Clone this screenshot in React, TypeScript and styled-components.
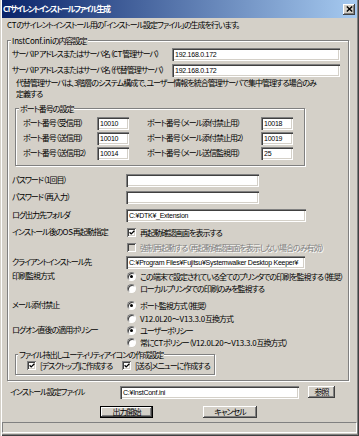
import styled, { createGlobalStyle } from 'styled-components';

const GlobalStyle = createGlobalStyle`
  html, body { margin: 0; padding: 0; background: #d4d0c8; }
  body {
    font-family: "Noto Sans CJK JP", "Noto Sans", sans-serif;
    font-size: 8px;
    letter-spacing: -1px;
    font-feature-settings: "palt";
    color: #000;
  }
  * { box-sizing: border-box; }
`;

const Window = styled.div`
  width: 359px;
  height: 436px;
  background: #d4d0c8;
  padding: 0 2px 2px 2px;
  display: flex;
  flex-direction: column;
  box-shadow: inset 1px 0 #d4d0c8, inset 2px 0 #fff, inset -1px -1px #404040,
    inset -2px -2px #808080;
`;

const TitleBar = styled.div`
  height: 18px;
  flex: none;
  display: flex;
  align-items: center;
  justify-content: space-between;
  padding: 0 2px 0 1px;
  background: linear-gradient(to right, #0a246a, #a6caf0);
`;

const Title = styled.span`
  color: #fff;
  font-weight: bold;
  font-size: 8px;
  letter-spacing: -1.5px;
  line-height: 18px;
  white-space: nowrap;
`;

const CloseButton = styled.div`
  width: 12px;
  height: 11px;
  background: #d4d0c8;
  box-shadow: inset -1px -1px #404040, inset 1px 1px #fff, inset -2px -2px #808080;
  display: flex;
  align-items: center;
  justify-content: center;
`;

// latin runs inside japanese text keep (almost) normal spacing
const Lat = styled.span`
  letter-spacing: -0.2px;
`;

const Intro = styled.div`
  height: 14px;
  line-height: 14px;
  margin-left: 5px;
  white-space: nowrap;
`;

const Group = styled.fieldset<{ $w: number; $ml: number; $mt: number; $pb: number; $pl?: number }>`
  margin: ${(p) => p.$mt}px 0 0 ${(p) => p.$ml}px;
  padding: 0 0 ${(p) => p.$pb}px ${(p) => p.$pl ?? 4}px;
  width: ${(p) => p.$w}px;
  min-width: 0;
  flex: none;
  border: 1px solid #808080;
  box-shadow: inset 1px 1px #fff, 1px 1px #fff;
`;

const Legend = styled.legend`
  padding: 0 1px;
  margin-left: -1px;
  height: 11px;
  line-height: 11px;
  background: #d4d0c8;
  white-space: nowrap;
`;

const Row = styled.div<{ $h?: number; $mt?: number; $ml?: number }>`
  display: flex;
  align-items: center;
  height: ${(p) => p.$h ?? 14}px;
  margin-top: ${(p) => p.$mt ?? 0}px;
  margin-left: ${(p) => p.$ml ?? 0}px;
  white-space: nowrap;
  flex: none;
`;

const Label = styled.span<{ $w: number }>`
  width: ${(p) => p.$w}px;
  flex: none;
  line-height: 12px;
  white-space: nowrap;
`;

const TextBox = styled.div<{ $w: number }>`
  width: ${(p) => p.$w}px;
  height: 13px;
  flex: none;
  background: #fff;
  box-shadow: inset 1px 1px #808080, inset 2px 2px #404040, inset -1px -1px #fff,
    inset -2px -2px #d4d0c8;
  padding-left: 3px;
  font-family: "Liberation Sans", Arial, sans-serif;
  font-size: 7px;
  letter-spacing: -0.25px;
  line-height: 13px;
  white-space: nowrap;
  overflow: hidden;
`;

const Note = styled.div`
  margin-left: 4px;
  line-height: 11px;
  height: 22px;
  white-space: nowrap;
`;

const PortRow = styled.div<{ $mt?: number }>`
  display: flex;
  align-items: center;
  height: 15px;
  margin-top: ${(p) => p.$mt ?? 0}px;
  padding-left: 3px;
  white-space: nowrap;
`;

const Spacer = styled.span<{ $w: number }>`
  width: ${(p) => p.$w}px;
  flex: none;
`;

const Field = styled.div<{ $mt: number }>`
  display: flex;
  margin-top: ${(p) => p.$mt}px;
  flex: none;
`;

const FieldLabel = styled.div`
  width: 114px;
  height: 12px;
  line-height: 12px;
  flex: none;
  white-space: nowrap;
`;

const Options = styled.div<{ $gap?: number }>`
  display: flex;
  flex-direction: column;
  gap: ${(p) => p.$gap ?? 0}px;
`;

const Option = styled.div<{ $disabled?: boolean; $w?: number }>`
  display: flex;
  align-items: center;
  gap: 4px;
  height: 12px;
  padding-left: 1px;
  white-space: nowrap;
  ${(p) => (p.$w ? `width: ${p.$w}px; flex: none;` : '')}
  color: ${(p) => (p.$disabled ? '#808080' : '#000')};
  ${(p) => (p.$disabled ? 'text-shadow: 1px 1px #fff;' : '')}
`;

const CheckBox = styled.span<{ $disabled?: boolean }>`
  width: 9px;
  height: 9px;
  flex: none;
  display: flex;
  align-items: center;
  justify-content: center;
  background: ${(p) => (p.$disabled ? '#d4d0c8' : '#fff')};
  box-shadow: inset 1px 1px #808080, inset -1px -1px #fff, inset 2px 2px #404040,
    inset -2px -2px #d4d0c8;
`;

const RadioDot = styled.span<{ $on?: boolean }>`
  width: 9px;
  height: 9px;
  flex: none;
  border-radius: 50%;
  background: #fff;
  border: 1px solid;
  border-color: #808080 #fff #fff #808080;
  box-shadow: inset 1px 1px #404040;
  display: flex;
  align-items: center;
  justify-content: center;
  &::after {
    content: '';
    display: ${(p) => (p.$on ? 'block' : 'none')};
    width: 3px;
    height: 3px;
    border-radius: 50%;
    background: #000;
  }
`;

const CheckRow = styled.div`
  display: flex;
  align-items: center;
  height: 11px;
  padding-left: 7px;
`;

const Button = styled.div<{ $w: number; $default?: boolean }>`
  width: ${(p) => p.$w}px;
  height: 12px;
  flex: none;
  display: flex;
  align-items: center;
  justify-content: center;
  line-height: 12px;
  background: #d4d0c8;
  box-shadow: ${(p) =>
    p.$default
      ? 'inset 0 0 0 1px #000, inset -2px -2px #404040, inset 2px 2px #fff, inset -3px -3px #808080'
      : 'inset -1px -1px #404040, inset 1px 1px #fff, inset -2px -2px #808080'};
`;

const ButtonRow = styled.div`
  display: flex;
  gap: 50px;
  margin: 6.5px 0 0 98px;
  flex: none;
`;

const StatusBar = styled.div`
  height: 11px;
  margin-top: 4.5px;
  flex: none;
  border: 1px solid;
  border-color: #808080 #fff #fff #808080;
`;

const Check = ({ disabled }: { disabled?: boolean }) => (
  <CheckBox $disabled={disabled}>
    {!disabled && (
      <svg width="6" height="5" viewBox="0 0 6 5">
        <path d="M0.6 2.2 L2.2 3.9 L5.4 0.7" fill="none" stroke="#000" strokeWidth="1.3" />
      </svg>
    )}
  </CheckBox>
);

const ports = [
  ['ポート番号（受信用）', '10010', 'ポート番号（メール添付禁止用）', '10018'],
  ['ポート番号（送信用）', '10010', 'ポート番号（メール添付禁止用2）', '10019'],
  ['ポート番号（送信用2）', '10014', 'ポート番号（メール送信監視用）', '25'],
];

const App = () => (
  <>
    <GlobalStyle />
    <Window>
      <TitleBar>
        <Title>CTサイレントインストールファイル生成</Title>
        <CloseButton>
          <svg width="7" height="6" viewBox="0 0 7 6">
            <path d="M0.8 0.5 L6.2 5.5 M6.2 0.5 L0.8 5.5" stroke="#000" strokeWidth="1.4" />
          </svg>
        </CloseButton>
      </TitleBar>

      <Intro>
        <Lat>CT</Lat>のサイレントインストール用の「インストール設定ファイル」の生成を行います。
      </Intro>

      <Group $w={342} $ml={5} $mt={3} $pb={5}>
        <Legend>
          <Lat>InstConf.ini</Lat>の内容設定
        </Legend>
        <Row $mt={1}>
          <Label $w={160}>
            サーバ<Lat>IP</Lat>アドレスまたはサーバ名（<Lat>CT</Lat>管理サーバ）
          </Label>
          <TextBox $w={168}>192.168.0.172</TextBox>
        </Row>
        <Row $mt={2}>
          <Label $w={160}>
            サーバ<Lat>IP</Lat>アドレスまたはサーバ名（代替管理サーバ）
          </Label>
          <TextBox $w={168}>192.168.0.172</TextBox>
        </Row>
        <Note>
          代替管理サーバは、3階層のシステム構成で、ユーザー情報を統合管理サーバで集中管理する場合のみ
          <br />
          定義する
        </Note>

        <Group $w={290} $ml={3} $mt={3.5} $pb={4}>
          <Legend>ポート番号の設定</Legend>
          {ports.map(([l1, v1, l2, v2], i) => (
            <PortRow key={l1} $mt={i === 0 ? 2 : 0}>
              <Label $w={74}>{l1}</Label>
              <TextBox $w={32}>{v1}</TextBox>
              <Spacer $w={18} />
              <Label $w={114}>{l2}</Label>
              <TextBox $w={32}>{v2}</TextBox>
            </PortRow>
          ))}
        </Group>

        <Row $mt={7.5}>
          <Label $w={114}>パスワード（1回目）</Label>
          <TextBox $w={133} />
        </Row>
        <Row $mt={3}>
          <Label $w={114}>パスワード（再入力）</Label>
          <TextBox $w={133} />
        </Row>
        <Row $mt={4}>
          <Label $w={114}>ログ出力先フォルダ</Label>
          <TextBox $w={180}>C:¥DTK¥_Extension</TextBox>
        </Row>
        <Row $mt={3}>
          <Label $w={114}>
            インストール後の<Lat>OS</Lat>再起動指定
          </Label>
          <Option>
            <Check />
            再起動確認画面を表示する
          </Option>
        </Row>
        <Row $mt={1}>
          <Label $w={114} />
          <Option $disabled>
            <Check disabled />
            強制再起動する（再起動確認画面を表示しない場合のみ有効）
          </Option>
        </Row>
        <Row $mt={1}>
          <Label $w={114}>クライアントインストール先</Label>
          <TextBox $w={179}>C:¥Program Files¥Fujitsu¥Systemwalker Desktop Keeper¥</TextBox>
        </Row>

        <Field $mt={1}>
          <FieldLabel>印刷監視方式</FieldLabel>
          <Options>
            <Option>
              <RadioDot $on />
              この端末で設定されている全てのプリンタでの印刷を監視する（推奨）
            </Option>
            <Option>
              <RadioDot />
              ローカルプリンタでの印刷のみを監視する
            </Option>
          </Options>
        </Field>
        <Field $mt={5}>
          <FieldLabel>メール添付禁止</FieldLabel>
          <Options $gap={1}>
            <Option>
              <RadioDot $on />
              ポート監視方式（推奨）
            </Option>
            <Option>
              <RadioDot />
              <span>
                <Lat>V12.0L20～V13.3.0</Lat>互換方式
              </span>
            </Option>
          </Options>
        </Field>
        <Field $mt={0}>
          <FieldLabel>ログオン直後の適用ポリシー</FieldLabel>
          <Options>
            <Option>
              <RadioDot $on />
              ユーザーポリシー
            </Option>
            <Option>
              <RadioDot />
              <span>
                常に<Lat>CT</Lat>ポリシー（<Lat>V12.0L20～V13.3.0</Lat>互換方式）
              </span>
            </Option>
          </Options>
        </Field>

        <Group $w={200} $ml={3} $mt={1} $pl={3} $pb={3}>
          <Legend>ファイル持出しユーティリティアイコンの作成設定</Legend>
          <CheckRow>
            <Option $w={95}>
              <Check />
              [デスクトップ]に作成する
            </Option>
            <Option>
              <Check />
              [送る]メニューに作成する
            </Option>
          </CheckRow>
        </Group>
      </Group>

      <Row $mt={4} $ml={8}>
        <Label $w={110}>インストール設定ファイル</Label>
        <TextBox $w={179}>C:¥InstConf.ini</TextBox>
        <Spacer $w={9} />
        <Button $w={27}>参照</Button>
      </Row>

      <ButtonRow>
        <Button $w={53} $default>
          出力開始
        </Button>
        <Button $w={54}>キャンセル</Button>
      </ButtonRow>

      <StatusBar />
    </Window>
  </>
);

export default App;
